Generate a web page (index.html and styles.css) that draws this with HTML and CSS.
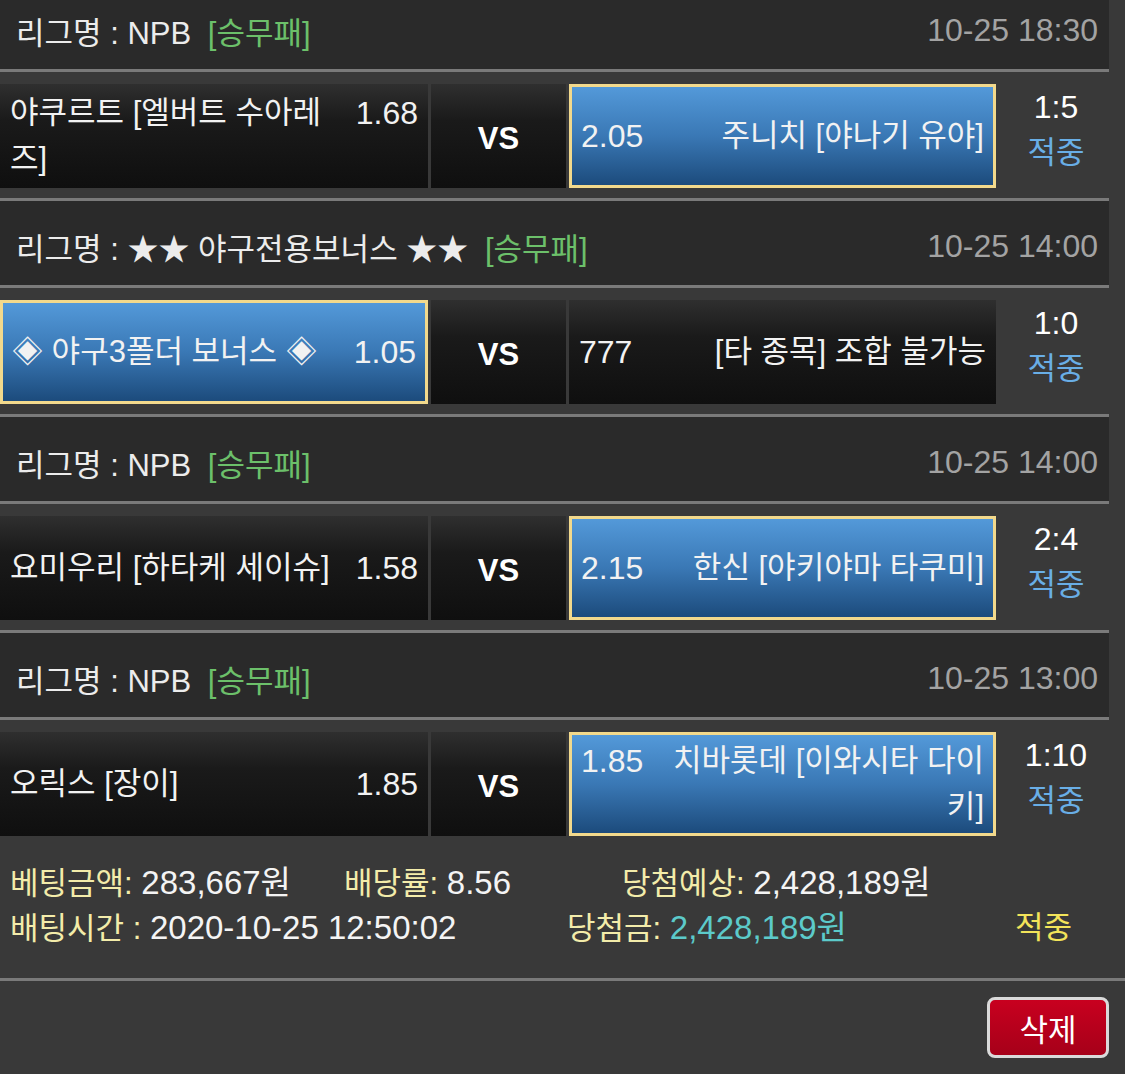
FILE: index.html
```html
<!DOCTYPE html>
<html lang="ko">

<head>
    <meta charset="UTF-8">
    <meta name="viewport" content="width=device-width, initial-scale=1.0">
    <title>베팅내역</title>
    <link rel="stylesheet" href="styles.css">
</head>

<body>

    <div class="slip">
        <div class="matches">
            <div class="match">
                <div class="league">
                    <span class="league-name">리그명 : NPB <span class="bet-type">[승무패]</span></span>
                    <span class="league-time">10-25 18:30</span>
                </div>
                <div class="game">
                    <div class="pick home">
                        <div class="pick-text"><span class="odds">1.68</span>야쿠르트 [엘버트 수아레즈]</div>
                    </div>
                    <div class="vs">VS</div>
                    <div class="pick away selected">
                        <div class="pick-text"><span class="odds">2.05</span>주니치 [야나기 유야]</div>
                    </div>
                    <div class="result">
                        <div class="score">1:5</div>
                        <div class="hit">적중</div>
                    </div>
                </div>
            </div>

            <div class="match">
                <div class="league">
                    <span class="league-name">리그명 : ★★ 야구전용보너스 ★★ <span class="bet-type">[승무패]</span></span>
                    <span class="league-time">10-25 14:00</span>
                </div>
                <div class="game">
                    <div class="pick home selected">
                        <div class="pick-text"><span class="odds">1.05</span>◈ 야구3폴더 보너스 ◈</div>
                    </div>
                    <div class="vs">VS</div>
                    <div class="pick away">
                        <div class="pick-text"><span class="odds">777</span>[타 종목] 조합 불가능</div>
                    </div>
                    <div class="result">
                        <div class="score">1:0</div>
                        <div class="hit">적중</div>
                    </div>
                </div>
            </div>

            <div class="match">
                <div class="league">
                    <span class="league-name">리그명 : NPB <span class="bet-type">[승무패]</span></span>
                    <span class="league-time">10-25 14:00</span>
                </div>
                <div class="game">
                    <div class="pick home">
                        <div class="pick-text"><span class="odds">1.58</span>요미우리 [하타케 세이슈]</div>
                    </div>
                    <div class="vs">VS</div>
                    <div class="pick away selected">
                        <div class="pick-text"><span class="odds">2.15</span>한신 [야키야마 타쿠미]</div>
                    </div>
                    <div class="result">
                        <div class="score">2:4</div>
                        <div class="hit">적중</div>
                    </div>
                </div>
            </div>

            <div class="match">
                <div class="league">
                    <span class="league-name">리그명 : NPB <span class="bet-type">[승무패]</span></span>
                    <span class="league-time">10-25 13:00</span>
                </div>
                <div class="game">
                    <div class="pick home">
                        <div class="pick-text"><span class="odds">1.85</span>오릭스 [장이]</div>
                    </div>
                    <div class="vs">VS</div>
                    <div class="pick away selected">
                        <div class="pick-text"><span class="odds">1.85</span>치바롯데 [이와시타 다이키]</div>
                    </div>
                    <div class="result">
                        <div class="score">1:10</div>
                        <div class="hit">적중</div>
                    </div>
                </div>
            </div>
        </div>

        <div class="summary">
            <div class="summary-line">
                <span class="amount"><span class="label">베팅금액:</span> <span class="value">283,667원</span></span>
                <span class="rate"><span class="label">배당률:</span> <span class="value">8.56</span></span>
                <span><span class="label">당첨예상:</span> <span class="value">2,428,189원</span></span>
            </div>
            <div class="summary-line">
                <span class="bet-time"><span class="label">배팅시간 :</span> <span class="value">2020-10-25 12:50:02</span></span>
                <span class="payout"><span class="label">당첨금:</span> <span class="value win">2,428,189원</span></span>
                <span class="status">적중</span>
            </div>
        </div>
    </div>

    <div class="actions">
        <button type="button" class="delete-btn">삭제</button>
    </div>

</body>

</html>
```

FILE: styles.css
```css
body {
    margin: 0;
    background: #393939;
    color: #f2f2f2;
    font-family: 'Liberation Sans', 'Noto Sans CJK KR', sans-serif;
    font-size: 31px;
}

.slip {
    width: 1109px;
    margin-top: -15px;
}

.match + .match {
    border-top: 3px solid #7a7a7a;
}

.league {
    height: 87px;
    box-sizing: border-box;
    padding: 6px 11px 0 16px;
    display: flex;
    align-items: center;
    justify-content: space-between;
    background: #2a2a2a;
    border-bottom: 3px solid #7a7a7a;
    color: #ececec;
    white-space: nowrap;
}

.bet-type {
    margin-left: 8px;
    color: #6cc06a;
}

.league-time {
    color: #a3a3a3;
    font-size: 32px;
}

.game {
    height: 126px;
    box-sizing: border-box;
    padding-bottom: 10px;
    display: grid;
    grid-template-columns: 428px 135px 427px 1fr;
    column-gap: 3px;
}

.pick,
.vs {
    margin-top: 12px;
    box-sizing: border-box;
    background: linear-gradient(#2f2f2f, #1a1a1a 35%, #0f0f0f);
}

.pick {
    display: flex;
    align-items: center;
    padding: 0 10px;
    line-height: 46px;
}

.pick.selected {
    background: linear-gradient(#5399d9, #3a78b5 50%, #1c4b7c);
    border: 3px solid #f2d98c;
    padding: 0 9px;
}

.pick-text {
    width: 100%;
    display: flow-root;
}

.odds {
    font-size: 32px;
}

.home .odds {
    float: right;
    margin-left: 6px;
}

.away .pick-text {
    text-align: right;
}

.away .odds {
    float: left;
    margin-right: 6px;
}

.vs {
    display: flex;
    align-items: center;
    justify-content: center;
    padding-top: 6px;
    font-weight: bold;
    color: #fff;
}

.result {
    display: flex;
    flex-direction: column;
    justify-content: center;
    align-items: center;
    line-height: 46px;
    padding-left: 4px;
}

.score {
    color: #fff;
    font-size: 32px;
}

.hit {
    color: #69aee6;
}

.summary {
    height: 132px;
    box-sizing: border-box;
    padding: 15px 0 0 10px;
    line-height: 44px;
    color: #f4f4f4;
}

.summary-line {
    display: flex;
    white-space: nowrap;
}

.label {
    color: #f3ecaa;
}

.value {
    font-size: 33px;
}

.amount {
    width: 334px;
}

.rate {
    width: 278px;
}

.bet-time {
    width: 557px;
}

.payout {
    width: 448px;
}

.win {
    color: #5ccaca;
}

.status {
    color: #f3e45a;
}

.actions {
    border-top: 3px solid #7a7a7a;
    padding: 16px 16px 16px 0;
    display: flex;
    justify-content: flex-end;
}

.delete-btn {
    width: 122px;
    height: 61px;
    border: 3px solid #dadada;
    border-radius: 8px;
    background: linear-gradient(#c8001f, #a60019);
    color: #fff;
    font-family: inherit;
    font-size: 31px;
    padding: 0;
}
```
